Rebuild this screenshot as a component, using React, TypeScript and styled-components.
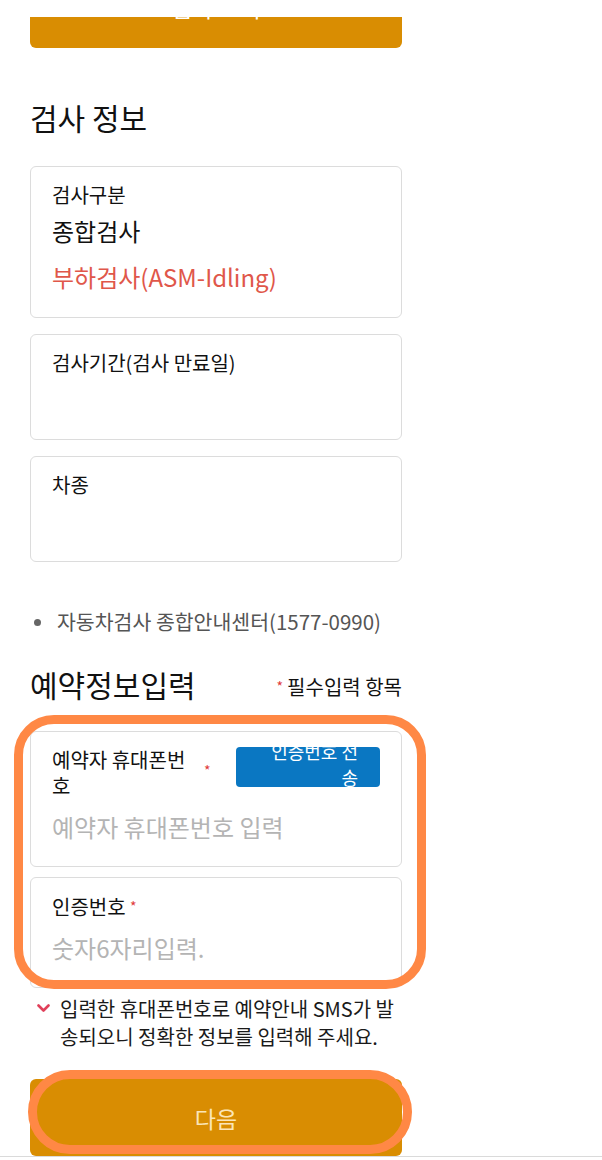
import React from 'react'
import styled, { createGlobalStyle } from 'styled-components'

const GlobalStyle = createGlobalStyle`
  html, body {
    margin: 0;
    padding: 0;
    background: #fff;
  }
  body {
    font-family: "Noto Sans CJK KR", "Noto Sans", sans-serif;
    color: #111;
    overflow: hidden;
  }
  * { box-sizing: border-box; }
`

const Page = styled.div`
  width: 402px;
  padding: 17px 0 0 30px;
  display: flex;
  flex-direction: column;
`

const OrangeButton = styled.button<{ $top?: boolean }>`
  position: relative;
  width: 372px;
  height: ${p => (p.$top ? '31px' : '77px')};
  border: none;
  border-radius: ${p => (p.$top ? '0 0 6px 6px' : '6px')};
  background: #d98d02;
  color: ${p => (p.$top ? '#fff' : '#fbe5b8')};
  font-family: inherit;
  font-size: 23px;
  display: flex;
  align-items: ${p => (p.$top ? 'flex-start' : 'center')};
  justify-content: center;
  padding: 0;
  overflow: hidden;
`

const ClippedLabel = styled.span`
  display: block;
  line-height: 30px;
  margin-top: -25px;
`

const SectionTitle = styled.h2`
  margin: 49px 0 29px;
  font-size: 30px;
  line-height: 40px;
  font-weight: 400;
  color: #111;
`

const CardStack = styled.div<{ $gap: number }>`
  display: flex;
  flex-direction: column;
  gap: ${p => p.$gap}px;
`

const Card = styled.div`
  border: 1px solid #dcdcdc;
  border-radius: 6px;
  padding: 15px 21px 17px;
  background: #fff;
`

const Label = styled.div`
  font-size: 20px;
  line-height: 26px;
  color: #111;
`

const Value = styled.div<{ $red?: boolean }>`
  font-size: 24px;
  line-height: 46px;
  min-height: 46px;
  color: ${p => (p.$red ? '#e0574a' : '#111')};
`

const Field = styled.input`
  display: block;
  width: 100%;
  height: 46px;
  margin-top: 4px;
  padding: 0;
  border: none;
  outline: none;
  background: transparent;
  font-family: inherit;
  font-size: 24px;
  color: #111;
  &::placeholder {
    color: #b4b4b4;
  }
`

const InfoList = styled.ul`
  margin: 45px 0 0;
  padding: 0;
  list-style: none;
`

const InfoItem = styled.li`
  position: relative;
  padding-left: 27px;
  font-size: 20.5px;
  line-height: 28px;
  color: #555;
  &::before {
    content: '';
    position: absolute;
    left: 4px;
    top: 12px;
    width: 7px;
    height: 7px;
    border-radius: 50%;
    background: #666;
  }
`

const TitleRow = styled.div`
  display: flex;
  justify-content: space-between;
  align-items: center;
  margin: 29px 0 27px;
`

const TitleText = styled.h2`
  margin: 0;
  font-size: 30px;
  line-height: 40px;
  font-weight: 400;
`

const RequiredNote = styled.span`
  font-size: 20px;
  line-height: 26px;
  margin-top: 4px;
  color: #111;
`

const Star = styled.span<{ $gap?: number }>`
  color: #e03a3a;
  font-size: 14px;
  margin: 0 ${p => p.$gap ?? 4}px 0 0;
  vertical-align: 3px;
`

const PhoneSection = styled.div`
  position: relative;
`

const Highlight = styled.div<{ $pill?: boolean }>`
  position: absolute;
  border: 9px solid #ff8845;
  border-radius: ${p => (p.$pill ? '44px' : '40px')};
  pointer-events: none;
`

const LabelRow = styled.div`
  display: flex;
  align-items: flex-start;
`

const PhoneLabel = styled(Label)`
  width: 140px;
`

const RowStar = styled.span`
  align-self: center;
  margin-left: 12px;
  margin-top: -6px;
  color: #e03a3a;
  font-size: 14px;
`

const SendButton = styled.button`
  margin-left: auto;
  width: 144px;
  height: 40px;
  border: none;
  border-radius: 4px;
  background: #0a77c2;
  color: #fff;
  font-family: inherit;
  font-size: 18px;
  line-height: 26px;
  text-align: right;
  padding: 0 22px 6px 26px;
  display: flex;
  align-items: center;
  justify-content: flex-end;
`

const Notice = styled.div`
  display: flex;
  align-items: flex-start;
  margin-top: 7px;
  padding-left: 7px;
  gap: 10px;
  width: 380px;
`

const NoticeText = styled.p`
  margin: 0;
  font-size: 20px;
  line-height: 28px;
  color: #1a1a1a;
  width: 348px;
`

const CheckIcon = styled.svg`
  flex: none;
  margin-top: 9px;
`

const ButtonWrap = styled.div`
  position: relative;
  margin-top: 28px;
`

const Footer = styled.div`
  width: 602px;
  height: 10px;
  border-top: 1px solid #dadada;
  background: #fff;
`

export default function App() {
  return (
    <>
      <GlobalStyle />
      <Page>
        <OrangeButton $top>
          <ClippedLabel>검사 조회</ClippedLabel>
        </OrangeButton>

        <SectionTitle>검사 정보</SectionTitle>
        <CardStack $gap={16}>
          <Card>
            <Label>검사구분</Label>
            <Value>종합검사</Value>
            <Value $red>부하검사(ASM-Idling)</Value>
          </Card>
          <Card>
            <Label>검사기간(검사 만료일)</Label>
            <Value />
          </Card>
          <Card>
            <Label>차종</Label>
            <Value />
          </Card>
        </CardStack>

        <InfoList>
          <InfoItem>자동차검사 종합안내센터(1577-0990)</InfoItem>
        </InfoList>

        <TitleRow>
          <TitleText>예약정보입력</TitleText>
          <RequiredNote>
            <Star>*</Star>필수입력 항목
          </RequiredNote>
        </TitleRow>

        <PhoneSection>
          <CardStack $gap={10}>
            <Card>
              <LabelRow>
                <PhoneLabel>예약자 휴대폰번호</PhoneLabel>
                <RowStar>*</RowStar>
                <SendButton>인증번호 전송</SendButton>
              </LabelRow>
              <Field placeholder="예약자 휴대폰번호 입력" />
            </Card>
            <Card>
              <Label>
                인증번호 <Star $gap={0}>*</Star>
              </Label>
              <Field placeholder="숫자6자리입력." />
            </Card>
          </CardStack>
          <Highlight style={{ top: -16, left: -16, right: -24, bottom: -1 }} />
        </PhoneSection>

        <Notice>
          <CheckIcon width="13" height="9" viewBox="0 0 13 9">
            <path d="M1.5 1.5 L6.5 6.5 L11.5 1.5" fill="none" stroke="#e0405a" strokeWidth="2.6" strokeLinecap="round" strokeLinejoin="round" />
          </CheckIcon>
          <NoticeText>입력한 휴대폰번호로 예약안내 SMS가 발송되오니 정확한 정보를 입력해 주세요.</NoticeText>
        </Notice>

        <ButtonWrap>
          <OrangeButton>다음</OrangeButton>
          <Highlight $pill style={{ top: -9, left: -2, right: -10, bottom: 2 }} />
        </ButtonWrap>
      </Page>
      <Footer />
    </>
  )
}
